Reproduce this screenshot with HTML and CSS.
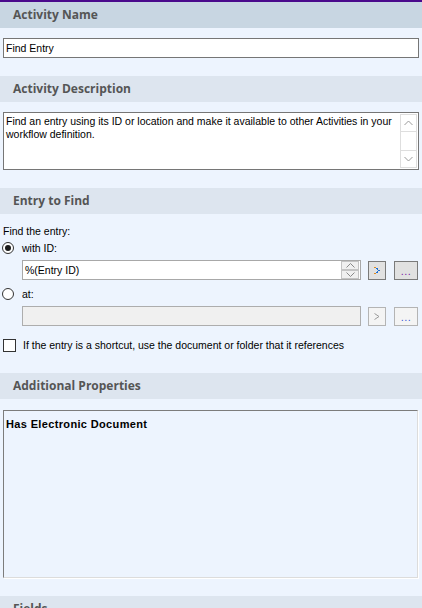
FILE: index.html
```html
<!DOCTYPE html>
<html>
<head>
<meta charset="utf-8">
<link rel="stylesheet" href="styles.css">
</head>
<body>
<div class="panel">
  <section class="sec">
    <div class="hd hd-active">Activity Name</div>
    <div class="body b-name">
      <div class="field">Find Entry</div>
    </div>
  </section>

  <section class="sec">
    <div class="hd">Activity Description</div>
    <div class="body b-desc">
      <div class="memo">
        <div class="memo-text">Find an entry using its ID or location and make it available to other Activities in your<br>workflow definition.</div>
        <div class="vscroll">
          <div class="sb-btn"><svg width="9" height="6" viewBox="0 0 9 6"><polyline points="0.5,5 4.5,1 8.5,5" fill="none" stroke="#9a9a9a" stroke-width="1"/></svg></div>
          <div class="sb-track"></div>
          <div class="sb-btn"><svg width="9" height="6" viewBox="0 0 9 6"><polyline points="0.5,1 4.5,5 8.5,1" fill="none" stroke="#9a9a9a" stroke-width="1"/></svg></div>
        </div>
      </div>
    </div>
  </section>

  <section class="sec">
    <div class="hd">Entry to Find</div>
    <div class="body b-entry">
      <div class="line r-title">Find the entry:</div>
      <div class="line r-radio1"><span class="radio on"></span><span>with ID:</span></div>
      <div class="inrow r-in1">
        <div class="idfield">
          <span class="idtext">%(Entry ID)</span>
          <div class="spin">
            <div class="spin-btn"><svg width="9" height="5" viewBox="0 0 9 5"><polyline points="0.5,4.5 4.5,0.5 8.5,4.5" fill="none" stroke="#8a8a8a"/></svg></div>
            <div class="spin-btn"><svg width="9" height="5" viewBox="0 0 9 5"><polyline points="0.5,0.5 4.5,4.5 8.5,0.5" fill="none" stroke="#8a8a8a"/></svg></div>
          </div>
        </div>
        <div class="btn btn-go"><svg width="6" height="7" viewBox="0 0 6 7"><rect x="0" y="0" width="2" height="1" fill="#e08a1e"/><rect x="2" y="1" width="2" height="1" fill="#1f6fd1"/><rect x="4" y="3" width="2" height="1" fill="#1f6fd1"/><rect x="3" y="2" width="1" height="1" fill="#1f6fd1"/><rect x="3" y="4" width="1" height="1" fill="#1f6fd1"/><rect x="2" y="5" width="2" height="1" fill="#1f6fd1"/><rect x="0" y="6" width="2" height="1" fill="#e08a1e"/></svg></div>
        <div class="btn btn-more"><span class="dots dots-purple">...</span></div>
      </div>
      <div class="line r-radio2"><span class="radio"></span><span>at:</span></div>
      <div class="inrow r-in2">
        <div class="idfield disabled"></div>
        <div class="btn btn-go dis"><svg width="6" height="7" viewBox="0 0 6 7"><polyline points="0.5,0.5 5,3.5 0.5,6.5" fill="none" stroke="#9a9a9a"/></svg></div>
        <div class="btn btn-more dis"><span class="dots dots-blue">...</span></div>
      </div>
      <div class="line r-check"><span class="check"></span><span>If the entry is a shortcut, use the document or folder that it references</span></div>
    </div>
  </section>

  <section class="sec">
    <div class="hd">Additional Properties</div>
    <div class="body b-props">
      <div class="props">
        <div class="prop">Has Electronic Document</div>
      </div>
    </div>
  </section>

  <section class="sec">
    <div class="hd">Fields</div>
  </section>
</div>
</body>
</html>
```

FILE: styles.css
```css
html, body {
  margin: 0;
  padding: 0;
  background: #edf4fe;
}

body {
  font-family: "Liberation Sans", Arial, sans-serif;
  font-size: 10.5px;
  color: #000;
  overflow: hidden;
  height: 608px;
}

.panel {
  border-top: 2px solid #4a0a8c;
  width: 422px;
}

.hd {
  height: 26px;
  line-height: 26px;
  padding-left: 13px;
  background: #dde5ef;
  font-family: "Open Sans", "Noto Sans", sans-serif;
  font-weight: 700;
  font-size: 12px;
  color: #555555;
}

.hd-active {
  background: #c8d6e2;
}

.body {
  display: flex;
  flex-direction: column;
}

.b-name {
  padding: 10px 3px 18px 3px;
}

.field {
  height: 18px;
  border: 1px solid #767676;
  background: #fff;
  line-height: 18px;
  padding-left: 2px;
}

.b-desc {
  padding: 10px 3px 18px 3px;
}

.memo {
  height: 56px;
  border: 1px solid #767676;
  background: #fff;
  display: flex;
}

.memo-text {
  flex: 1;
  min-width: 0;
  overflow: hidden;
  padding: 2px 0 0 2px;
  line-height: 13px;
  white-space: nowrap;
}

.vscroll {
  flex: none;
  width: 17px;
  margin: 1px 1px 1px 0;
  display: flex;
  flex-direction: column;
  border: 1px solid #dedede;
  box-sizing: border-box;
}

.sb-btn {
  height: 17px;
  border-bottom: 1px solid #dedede;
  box-sizing: border-box;
  display: flex;
  align-items: center;
  justify-content: center;
  background: #fff;
}

.sb-btn:last-child {
  border-bottom: none;
  border-top: 1px solid #dedede;
}

.sb-track {
  flex: 1;
}

.b-entry {
  padding: 10px 0 21px 0;
}

.line {
  height: 14px;
  display: flex;
  align-items: center;
  gap: 8px;
  line-height: 14px;
}

.r-title {
  padding-left: 3px;
}

.r-radio1 {
  margin-top: 3px;
  padding-left: 2px;
}

.r-in1 {
  margin-top: 5px;
}

.r-radio2 {
  margin-top: 7px;
  padding-left: 2px;
}

.r-in2 {
  margin-top: 5px;
}

.r-check {
  margin-top: 12px;
  padding-left: 3px;
  gap: 7px;
}

.radio {
  width: 12px;
  height: 12px;
  box-sizing: border-box;
  border: 1px solid #333;
  border-radius: 50%;
  background: #fff;
  display: flex;
  align-items: center;
  justify-content: center;
  flex: none;
}

.radio.on::after {
  content: "";
  width: 6px;
  height: 6px;
  border-radius: 50%;
  background: #1a1a1a;
}

.check {
  width: 13px;
  height: 13px;
  box-sizing: border-box;
  border: 1px solid #333;
  background: #fff;
  flex: none;
}

.inrow {
  display: flex;
  height: 20px;
  margin-left: 22px;
  margin-right: 4px;
  gap: 7px;
}

.idfield {
  flex: 1;
  border: 1px solid #a8a8a8;
  background: #fff;
  display: flex;
  align-items: center;
  justify-content: space-between;
  padding-left: 2px;
}

.idfield.disabled {
  background: #f0f0f0;
  border-color: #adadad;
}

.idtext {
  line-height: 18px;
}

.spin {
  display: flex;
  flex-direction: column;
  margin-right: 1px;
}

.spin-btn {
  width: 16px;
  height: 7px;
  border: 1px solid #c4c4c4;
  background: #f0f0f0;
  display: flex;
  align-items: center;
  justify-content: center;
}

.btn {
  box-sizing: border-box;
  height: 19px;
  margin-top: 1px;
  border: 1px solid #7a7a7a;
  background: #e1e1e1;
  display: flex;
  align-items: center;
  justify-content: center;
}

.btn-go {
  width: 18px;
}

.btn-more {
  width: 24px;
  margin-left: 1px;
}

.btn.dis {
  border-color: #b4b4b4;
  background: #f4f4f4;
}

.dots {
  font-size: 11px;
  line-height: 1;
  letter-spacing: 0.5px;
  margin-top: 2px;
}

.dots-purple {
  color: #7a1fa8;
}

.dots-blue {
  color: #3a5ad8;
}

.b-props {
  padding: 11px 4px 18px 3px;
}

.props {
  border: 1px solid;
  border-color: #7c7c7c #dcdcdc #dcdcdc #7c7c7c;
  box-shadow: 1px 1px 0 #ffffff;
  padding: 7px 0 0 2px;
  box-sizing: border-box;
  height: 168px;
}

.prop {
  font-weight: 700;
  font-size: 11px;
  letter-spacing: 0.35px;
}
```
